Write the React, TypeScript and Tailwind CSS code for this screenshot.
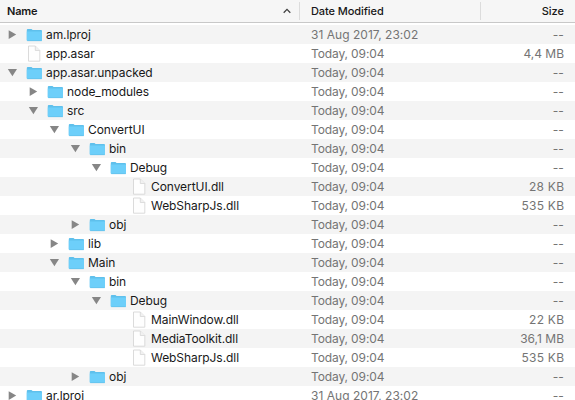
type Kind = 'open' | 'closed' | 'file';
type Entry = { name: string; level: number; kind: Kind; date?: string; size?: string };

const entries: Entry[] = [
  { name: 'am.lproj', level: 0, kind: 'closed', date: '31 Aug 2017, 23:02' },
  { name: 'app.asar', level: 0, kind: 'file', size: '4,4 MB' },
  { name: 'app.asar.unpacked', level: 0, kind: 'open' },
  { name: 'node_modules', level: 1, kind: 'closed' },
  { name: 'src', level: 1, kind: 'open' },
  { name: 'ConvertUI', level: 2, kind: 'open' },
  { name: 'bin', level: 3, kind: 'open' },
  { name: 'Debug', level: 4, kind: 'open' },
  { name: 'ConvertUI.dll', level: 5, kind: 'file', size: '28 KB' },
  { name: 'WebSharpJs.dll', level: 5, kind: 'file', size: '535 KB' },
  { name: 'obj', level: 3, kind: 'closed' },
  { name: 'lib', level: 2, kind: 'closed' },
  { name: 'Main', level: 2, kind: 'open' },
  { name: 'bin', level: 3, kind: 'open' },
  { name: 'Debug', level: 4, kind: 'open' },
  { name: 'MainWindow.dll', level: 5, kind: 'file', size: '22 KB' },
  { name: 'MediaToolkit.dll', level: 5, kind: 'file', size: '36,1 MB' },
  { name: 'WebSharpJs.dll', level: 5, kind: 'file', size: '535 KB' },
  { name: 'obj', level: 3, kind: 'closed' },
  { name: 'ar.lproj', level: 0, kind: 'closed', date: '31 Aug 2017, 23:02' },
];

const indents = ['pl-[7px]', 'pl-[28px]', 'pl-[49px]', 'pl-[70px]', 'pl-[91px]', 'pl-[112px]'];

function sizeTracking(size?: string) {
  if (!size) return 'tracking-[0.1px]';
  return size.endsWith('KB') ? 'tracking-[0.25px] -mr-[0.25px]' : 'tracking-normal';
}

function Disclosure({ kind }: { kind: Kind }) {
  return (
    <svg className="h-[19px] w-[19px] shrink-0" viewBox="0 0 19 19" fill="#868686">
      {kind === 'open' && <path d="M0.8 6H10L5.4 13.2Z" />}
      {kind === 'closed' && <path d="M1.7 5.2L9.2 9.6L1.7 14Z" />}
    </svg>
  );
}

function Folder() {
  return (
    <svg className="h-[19px] w-[20px] shrink-0" viewBox="0 0 20 19">
      <path d="M0.8 5Q0.8 4 1.8 4H5.2Q6 4 6.5 5H15Q16 5 16 6V15.4H0.8Z" fill="#5fc0ec" />
      <path d="M0.8 6.4H16V15Q16 16 15 16H1.8Q0.8 16 0.8 15Z" fill="#6dcffa" />
      <path d="M1.3 15.7H15.7" stroke="#62bde6" strokeWidth="0.6" />
    </svg>
  );
}

function Page() {
  return (
    <svg className="h-[19px] w-[20px] shrink-0" viewBox="0 0 20 19">
      <path d="M2.5 2H9.3L13.8 6.5V17.2H2.5Z" fill="#fefefe" stroke="#d2d2d2" strokeWidth="0.8" />
      <path d="M9.3 2V6.5H13.8" fill="#f1f1f1" stroke="#d6d6d6" strokeWidth="0.8" />
    </svg>
  );
}

export default function App() {
  return (
    <div className="h-[400px] w-[575px] overflow-hidden bg-white font-['Inter',sans-serif] text-[12px] text-[#181818]">
      <div className="flex h-[23px] items-center border-b border-[#c8c8c8] bg-[#f6f6f6] text-[11px] leading-[22px]">
        <div className="flex w-[299px] items-center justify-between pr-[8px] pl-[7px]">
          <span className="font-semibold tracking-[-0.2px]">Name</span>
          <svg className="h-[8px] w-[8px]" viewBox="0 0 8 8" fill="none" stroke="#404040" strokeWidth="1.3">
            <path d="M0.7 5.7L4 2.4L7.3 5.7" />
          </svg>
        </div>
        <div className="h-[18px] w-px bg-[#dcdcdc]" />
        <div className="w-[180px] pl-[11px] font-medium tracking-[-0.08px]">Date Modified</div>
        <div className="h-[18px] w-px bg-[#dcdcdc]" />
        <div className="flex-1 pr-[11px] text-right font-medium">Size</div>
      </div>
      <div className="pt-[2px]">
        {entries.map((entry, i) => (
          <div key={i} className="flex h-[19px] items-center leading-[19px] whitespace-nowrap odd:bg-[#f4f4f4]">
            <div className={`flex w-[300px] items-center ${indents[entry.level]}`}>
              <Disclosure kind={entry.kind} />
              {entry.kind === 'file' ? <Page /> : <Folder />}
              <span className="tracking-[-0.07px]">{entry.name}</span>
            </div>
            <div className={`w-[181px] pl-[11px] text-[#747474] ${entry.date ? 'tracking-[0.03px]' : 'tracking-[-0.12px]'}`}>
              {entry.date ?? 'Today, 09:04'}
            </div>
            <div className="flex-1 pr-[11px] text-right text-[#747474]">
              <span className={sizeTracking(entry.size)}>{entry.size ?? '--'}</span>
            </div>
          </div>
        ))}
      </div>
    </div>
  );
}
